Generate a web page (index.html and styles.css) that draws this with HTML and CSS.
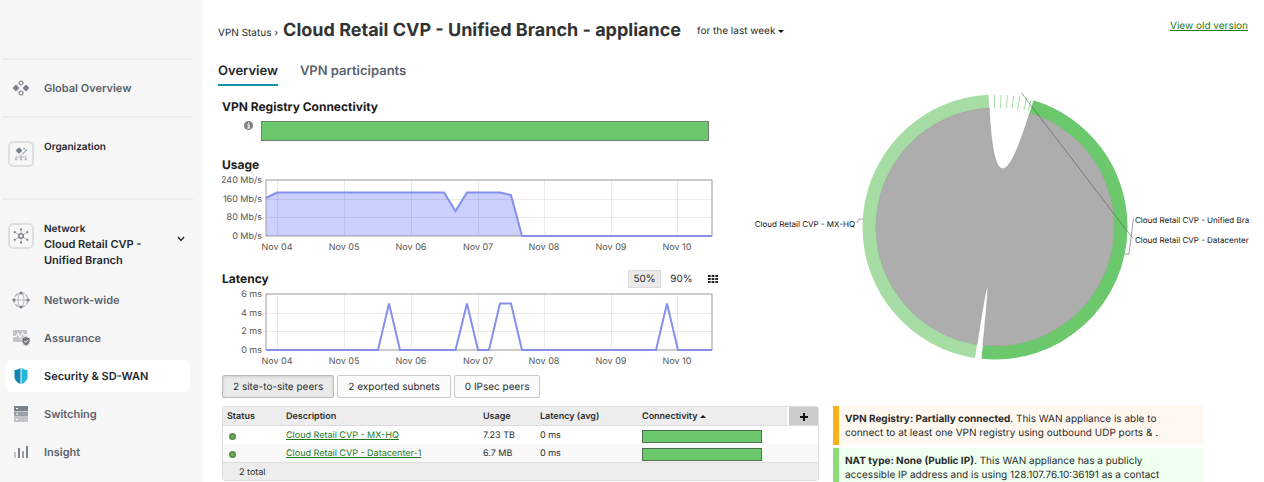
FILE: index.html
```html
<!DOCTYPE html>
<html lang="en">
<head>
  <meta charset="utf-8">
  <title>VPN Status</title>
  <link rel="stylesheet" href="styles.css">
</head>
<body>

  <aside class="sidebar">
    <div class="side-section global">
      <a class="side-row" href="#">
        <span class="side-icon">
          <svg width="16" height="16" viewBox="0 0 16 16">
            <path d="M3 5.6L5.4 8L3 10.4L.6 8zM13 5.6L15.4 8L13 10.4L10.6 8z" fill="#7a828c" stroke="#7a828c" stroke-width="1.4" stroke-linejoin="round"/>
            <circle cx="8" cy="3" r="1.9" fill="none" stroke="#8b929b" stroke-width="1.4"/>
            <circle cx="8" cy="13" r="1.9" fill="none" stroke="#8b929b" stroke-width="1.4"/>
          </svg>
        </span>
        Global Overview
      </a>
    </div>

    <div class="side-section organization">
      <span class="side-icon boxed">
        <svg width="14" height="14" viewBox="0 0 14 14">
          <path d="M9.5 1L12.3 3.6L9.5 6.4L8.5 5.4" fill="none" stroke="#8b929b" stroke-width="1.2" stroke-dasharray="1.5 1"/>
          <path d="M5 1.2L7.5 3.6L5 6L2.5 3.6z" fill="#7a828c" stroke="#7a828c" stroke-width="1.4" stroke-linejoin="round"/>
          <path d="M7 7.5V12M2 12V10H12V12" fill="none" stroke="#b4b8be" stroke-width="1.2"/>
          <path d="M1 12.5H3.4M5.8 12.5H8.2M10.6 12.5H13" stroke="#b4b8be" stroke-width="1.4"/>
        </svg>
      </span>
      <span class="side-label">Organization</span>
    </div>

    <div class="side-section network">
      <span class="side-icon boxed">
        <svg width="16" height="16" viewBox="0 0 16 16">
          <path d="M8 1V15M1.5 4L14.5 12M14.5 4L1.5 12" stroke="#b4b8be"/>
          <circle cx="8" cy="8" r="2.2" fill="#f7f7f7" stroke="#7a828c" stroke-width="1.6"/>
          <g fill="#7a828c">
            <circle cx="8" cy="1.3" r="1.1"/><circle cx="8" cy="14.7" r="1.1"/>
            <circle cx="1.7" cy="4.2" r="1.1"/><circle cx="14.3" cy="4.2" r="1.1"/>
            <circle cx="1.7" cy="11.8" r="1.1"/><circle cx="14.3" cy="11.8" r="1.1"/>
          </g>
        </svg>
      </span>
      <button class="network-picker">
        <span class="side-label">Network</span>
        <span class="network-name">Cloud Retail CVP - Unified Branch</span>
        <svg class="chevron" width="8" height="6" viewBox="0 0 8 6"><path d="M1 1L4 4.4L7 1" fill="none" stroke="#23282e" stroke-width="1.3"/></svg>
      </button>
    </div>

    <nav>
      <a class="side-row" href="#">
        <span class="side-icon">
          <svg width="18" height="18" viewBox="0 0 18 18">
            <g fill="none" stroke="#b4b8be">
              <circle cx="9" cy="9" r="7" stroke-width="1.4" stroke-dasharray="5 1.3"/>
              <ellipse cx="9" cy="9" rx="3" ry="7"/>
              <path d="M2 9H16"/>
            </g>
            <g fill="#7a828c">
              <circle cx="9" cy="2" r="1.6"/><circle cx="9" cy="16" r="1.6"/>
              <circle cx="2" cy="9" r="1.6"/><circle cx="16" cy="9" r="1.6"/>
            </g>
          </svg>
        </span>
        Network-wide
      </a>
      <a class="side-row" href="#">
        <span class="side-icon">
          <svg width="18" height="16" viewBox="0 0 18 16">
            <rect x="1" y="0" width="14" height="12" rx="1" fill="#c0c4c9"/>
            <path d="M1 6.5H4L6 3.5L8 7.5L10.5 2.5L12 5H15" fill="none" stroke="#f7f7f7" stroke-width="1.3"/>
            <path d="M14 6.5L18 8V11.5Q17.5 14.5 14 16Q10.5 14.5 10 11.5V8z" fill="#6f7782" stroke="#f7f7f7" stroke-width=".7"/>
            <path d="M12.3 11L13.6 12.3L15.8 9.8" fill="none" stroke="#fff"/>
          </svg>
        </span>
        Assurance
      </a>
      <a class="side-row active" href="#">
        <span class="side-icon">
          <svg width="14" height="16" viewBox="0 0 14 16">
            <path d="M6.5 0V16Q.5 13.5 .5 9V2Q4 1.8 6.5 0z" fill="#0f87ad"/>
            <path d="M7.5 0V16Q13.5 13.5 13.5 9V2Q10 1.8 7.5 0z" fill="#22b8dc"/>
          </svg>
        </span>
        Security &amp; SD-WAN
      </a>
      <a class="side-row" href="#">
        <span class="side-icon">
          <svg width="14" height="16" viewBox="0 0 14 16">
            <rect x="0" y="0" width="14" height="5" fill="#7a828c"/>
            <rect x="0" y="5.5" width="14" height="5" fill="#9ba0a8"/>
            <rect x="0" y="11" width="14" height="5" fill="#c0c4c9"/>
            <path d="M2 2.5H4M2 8H4M2 13.5H4" stroke="#fff"/>
          </svg>
        </span>
        Switching
      </a>
      <a class="side-row" href="#">
        <span class="side-icon">
          <svg width="16" height="14" viewBox="0 0 16 14">
            <rect x="1" y="7" width="2" height="6" fill="#c0c4c9"/>
            <rect x="5" y="3" width="2" height="10" fill="#7a828c"/>
            <rect x="9" y="6" width="2" height="7" fill="#9ba0a8"/>
            <rect x="13" y="1" width="2" height="12" fill="#7a828c"/>
          </svg>
        </span>
        Insight
      </a>
    </nav>
  </aside>

  <main>
    <header class="page-header">
      <span class="crumb">VPN Status ›</span>
      <h1>Cloud Retail CVP - Unified Branch - appliance</h1>
      <button class="timespan">for the last week <span class="caret"></span></button>
      <a class="old-version" href="#">View old version</a>
    </header>

    <div class="tabs">
      <a class="tab selected" href="#">Overview</a>
      <a class="tab" href="#">VPN participants</a>
    </div>

    <div class="summary">
      <div class="charts">
        <h2>VPN Registry Connectivity</h2>
        <div class="registry">
          <svg width="9" height="9" viewBox="0 0 9 9">
            <circle cx="4.5" cy="4.5" r="4.5" fill="#808080"/>
            <path d="M3.2 4H5V7M3 7H6.2M4 2.2H5.2" fill="none" stroke="#fff" stroke-width="1.2"/>
          </svg>
          <div class="registry-bar"></div>
        </div>

        <h2>Usage</h2>
        <svg class="chart" viewBox="0 0 497 80">
          <path class="area" d="M44 24L55 18.5H222L233.5 37L245 18.5H278L289 21L300 62H44z"/>
          <path class="grid" d="M55.5 6V62M122.5 6V62M189.5 6V62M256.5 6V62M322.5 6V62M389.5 6V62M455.5 6V62M44 25.5H490M44 43.5H490"/>
          <rect class="frame" x="44" y="6" width="446" height="56"/>
          <path class="line" d="M44 24L55 18.5H222L233.5 37L245 18.5H278L289 21L300 62H490"/>
          <g class="y-axis">
            <text x="40" y="9">240 Mb/s</text>
            <text x="40" y="28">160 Mb/s</text>
            <text x="40" y="46">80 Mb/s</text>
            <text x="40" y="65">0 Mb/s</text>
          </g>
          <g class="x-axis">
            <text x="55" y="76">Nov 04</text>
            <text x="122" y="76">Nov 05</text>
            <text x="189" y="76">Nov 06</text>
            <text x="256" y="76">Nov 07</text>
            <text x="322" y="76">Nov 08</text>
            <text x="389" y="76">Nov 09</text>
            <text x="455" y="76">Nov 10</text>
          </g>
        </svg>

        <div class="latency-head">
          <h2>Latency</h2>
          <button class="pct on">50%</button>
          <button class="pct">90%</button>
          <button class="grid-btn" aria-label="Table view">
            <svg width="10" height="8" viewBox="0 0 10 8"><path d="M0 1H10M0 4H10M0 7H10" stroke="#222" stroke-width="2" stroke-dasharray="2.7 .95"/></svg>
          </button>
        </div>
        <svg class="chart" viewBox="0 0 497 80">
          <path class="grid" d="M55.5 6V62M122.5 6V62M189.5 6V62M256.5 6V62M322.5 6V62M389.5 6V62M455.5 6V62M44 25.5H490M44 43.5H490"/>
          <rect class="frame" x="44" y="6" width="446" height="56"/>
          <path class="line" d="M44 62H156L167 15.5L178 62H233.5L245 15.5L256 62H267L278 15.5H289L300 62H434L445 15.5L456 62H490"/>
          <g class="y-axis">
            <text x="40" y="9">6 ms</text>
            <text x="40" y="28">4 ms</text>
            <text x="40" y="46">2 ms</text>
            <text x="40" y="65">0 ms</text>
          </g>
          <g class="x-axis">
            <text x="55" y="76">Nov 04</text>
            <text x="122" y="76">Nov 05</text>
            <text x="189" y="76">Nov 06</text>
            <text x="256" y="76">Nov 07</text>
            <text x="322" y="76">Nov 08</text>
            <text x="389" y="76">Nov 09</text>
            <text x="455" y="76">Nov 10</text>
          </g>
        </svg>
      </div>

      <!-- chord diagram, origin at the centre of the circle -->
      <svg class="chord" viewBox="-244 -137 501 278">
        <path d="M-20 131A132.5 132.5 0 0 1 -132.5 0A132.5 132.5 0 0 1 -6.5 -132.3L-5.8 -118.9A119 119 0 0 0 -119 0A119 119 0 0 0 -18 117.6z" fill="#a5dda5"/>
        <path d="M38.5 -126.8A132.5 132.5 0 0 1 132.5 0A132.5 132.5 0 0 1 -13.5 131.8L-12.1 118.4A119 119 0 0 0 119 0A119 119 0 0 0 34.6 -113.9z" fill="#6cc86c"/>
        <path d="M-18 117.6A119 119 0 0 1 -119 0A119 119 0 0 1 -5.8 -118.9Q0 0 34.6 -113.9A119 119 0 0 1 119 0A119 119 0 0 1 -12.1 118.4Q0 0 -18 117.6z" fill="#adadad" stroke="#8a948a" stroke-width=".5"/>
        <path d="M-.5 -132V-119M6 -132L5.5 -119M12.5 -132L11.5 -119M18.5 -131L17 -118.5M25 -131L22.5 -117M31.500 -130L29 -117M36 -127L33 -116" stroke="#8fd78f" stroke-width=".8"/>
        <path class="leader" d="M26.5 -134L136 9L138 11M138.5 -9L134 27H130M-132 -8H-136L-138 -4"/>
        <text x="-140" y="0" text-anchor="end" class="chord-label">Cloud Retail CVP - MX-HQ</text>
        <text x="140" y="-4" class="chord-label">Cloud Retail CVP - Unified Bra</text>
        <text x="140" y="16" class="chord-label">Cloud Retail CVP - Datacenter</text>
      </svg>
    </div>

    <div class="peer-buttons">
      <button class="on">2 site-to-site peers</button>
      <button>2 exported subnets</button>
      <button>0 IPsec peers</button>
    </div>

    <div class="details">
      <table>
        <thead>
          <tr>
            <th class="c-status">Status</th>
            <th class="c-desc">Description</th>
            <th class="c-usage">Usage</th>
            <th class="c-latency">Latency (avg)</th>
            <th class="c-conn">Connectivity <span class="caret up"></span></th>
            <th class="c-add"><button aria-label="Add column"><svg width="8" height="8" viewBox="0 0 8 8"><path d="M4 0V8M0 4H8" stroke="#111" stroke-width="2"/></svg></button></th>
          </tr>
        </thead>
        <tbody>
          <tr>
            <td><span class="dot"></span></td>
            <td><a href="#">Cloud Retail CVP - MX-HQ</a></td>
            <td>7.23 TB</td>
            <td>0 ms</td>
            <td colspan="2"><div class="conn-bar"></div></td>
          </tr>
          <tr>
            <td><span class="dot"></span></td>
            <td><a href="#">Cloud Retail CVP - Datacenter-1</a></td>
            <td>6.7 MB</td>
            <td>0 ms</td>
            <td colspan="2"><div class="conn-bar"></div></td>
          </tr>
        </tbody>
        <tfoot>
          <tr><td colspan="6">2 total</td></tr>
        </tfoot>
      </table>

      <div class="notices">
        <p class="notice warn"><b>VPN Registry: Partially connected</b>. This WAN appliance is able to connect to at least one VPN registry using outbound UDP ports &amp; .</p>
        <p class="notice ok"><b>NAT type: None (Public IP)</b>. This WAN appliance has a publicly accessible IP address and is using 128.107.76.10:36191 as a contact</p>
      </div>
    </div>
  </main>

</body>
</html>
```
FILE: styles.css
```css
* {
  box-sizing: border-box;
}
body {
  margin: 0;
  height: 100vh;
  overflow: hidden;
  display: flex;
  font-family: Inter, "Liberation Sans", sans-serif;
  font-size: 10px;
  line-height: 16px;
  text-rendering: geometricPrecision;
  color: #2b2b2b;
  background: #fff;
}
button {
  font: inherit;
  text-rendering: inherit;
  color: inherit;
  background: none;
  border: none;
  padding: 0;
  cursor: pointer;
}
svg {
  display: block;
}
a {
  color: #1f7a1a;
}

/* sidebar */
.sidebar {
  width: 203px;
  flex: none;
  background: #f7f7f7;
  padding-top: 58px;
  font-size: 11px;
  font-weight: 600;
}
.side-section {
  margin: 0 10px 0 2px;
  padding-left: 6px;
  border-top: 2px solid #eee;
  display: flex;
  gap: 10px;
}
.side-row {
  display: flex;
  align-items: center;
  gap: 10px;
  color: #5b626c;
  text-decoration: none;
}
.side-icon {
  width: 26px;
  height: 26px;
  flex: none;
  display: flex;
  align-items: center;
  justify-content: center;
}
.side-icon.boxed {
  border: 2px solid #dddfe2;
  border-radius: 5px;
}
.side-label {
  display: block;
  font-size: 10px;
  line-height: 14px;
  color: #23282e;
}
.global {
  height: 58px;
}
.organization {
  height: 82px;
  padding-top: 22px;
}
.organization .side-icon,
.network .side-icon {
  margin-top: 1px;
}
.network {
  padding-top: 22px;
  height: 86px;
}
.network-picker {
  flex: 1;
  display: grid;
  grid-template-columns: 1fr 16px;
  align-content: start;
  align-items: center;
  text-align: left;
  color: #23282e;
}
.network-picker .side-label {
  grid-column: 1 / 3;
}
.network-name {
  grid-row: 2 / 4;
  padding-right: 12px;
  font-weight: 600;
}
.chevron {
  grid-column: 2;
}
nav {
  padding: 0 13px 0 5px;
  display: flex;
  flex-direction: column;
  gap: 6px;
}
nav .side-row {
  height: 32px;
  padding-left: 3px;
  border-radius: 6px;
}
nav .active {
  background: #fff;
  color: #23282e;
}

/* header and tabs */
main {
  flex: 1;
  min-width: 0;
  padding: 18px 12px 0 19px;
}
.page-header {
  display: flex;
  align-items: baseline;
  height: 42px;
  margin-left: -4px;
}
h1 {
  font-size: 18px;
  line-height: 26px;
  margin: 0 16px 0 5px;
  color: #333;
}
.timespan {
  align-self: flex-start;
  line-height: 26px;
  white-space: nowrap;
}
.caret {
  display: inline-block;
  border: 3px solid transparent;
  border-top-color: #111;
  border-bottom: none;
  vertical-align: middle;
}
.caret.up {
  border-top: none;
  border-bottom: 3px solid #111;
}
.old-version {
  margin: 0 4px 0 auto;
  align-self: flex-start;
}
.tabs {
  display: flex;
  gap: 22px;
  margin-left: -4px;
}
.tab {
  font-size: 13px;
  font-weight: 600;
  line-height: 22px;
  padding-bottom: 2px;
  color: #5b626c;
  text-decoration: none;
  border-bottom: 2px solid transparent;
}
.tab.selected {
  color: #23282e;
  border-bottom-color: #1990ad;
}

/* charts */
.summary {
  display: grid;
  grid-template-columns: 497fr 501fr;
  gap: 32px;
  align-items: start;
  margin-top: 4px;
}
.charts {
  padding-top: 8px;
}
h2 {
  font-size: 12px;
  line-height: 18px;
  font-weight: 700;
  margin: 0;
  color: #1d1d1d;
}
.registry {
  display: flex;
  gap: 8px;
  padding: 5px 10px 15px 22px;
}
.registry-bar {
  flex: 1;
  height: 20px;
  background: #6cc86c;
  border: 1px solid #708070;
}
.chart {
  width: 100%;
}
.chart text {
  font-size: 9px;
  fill: #555;
}
.y-axis {
  text-anchor: end;
}
.x-axis {
  text-anchor: middle;
}
.grid {
  stroke: #000;
  stroke-opacity: .08;
}
.area {
  fill: #ccd0ff;
}
.frame {
  fill: none;
  stroke: #999;
}
.line {
  fill: none;
  stroke: #8590ec;
  stroke-width: 2;
}
.latency-head {
  display: flex;
  align-items: center;
  height: 18px;
  margin-top: 16px;
}
.latency-head h2 {
  margin-right: auto;
}
.pct {
  width: 33px;
  height: 18px;
  margin-right: 4px;
}
.pct.on {
  background: #e9e9e9;
  border: 1px solid #ddd;
}
.grid-btn {
  margin: 0 1px 0 6px;
}
.chord {
  width: 100%;
  overflow: hidden;
}
.chord-label {
  font-size: 8px;
  fill: #111;
}
.leader {
  fill: none;
  stroke: #444;
  stroke-width: .5;
}

/* peers table and notices */
.peer-buttons {
  display: flex;
  gap: 3px;
  margin: 7px 0 8px;
}
.peer-buttons button {
  height: 23px;
  padding: 0 10px;
  border: 1px solid #c9c9c9;
  border-radius: 2px;
  background: #fbfbfb;
}
.peer-buttons .on {
  background: #ebebeb;
  border-color: #bbb;
  box-shadow: inset 0 1px 3px #ccc;
}
.details {
  display: grid;
  grid-template-columns: 597fr 370fr 35fr;
  gap: 14px;
  align-items: start;
}
table {
  width: 100%;
  table-layout: fixed;
  border-spacing: 0;
  border: 1px solid #ddd;
  border-radius: 3px;
  font-size: 9px;
  line-height: 12px;
}
th, td {
  padding: 2px 4px 0;
  text-align: left;
}
th {
  height: 19px;
  background: #ededed;
  border-bottom: 1px solid #ddd;
  font-weight: 600;
}
td {
  height: 18px;
}
tbody tr:nth-child(2) td {
  background: #f8f8f8;
}
tfoot td {
  background: #ededed;
  border-top: 1px solid #ddd;
  padding-left: 16px;
}
.c-status { width: 59px; }
.c-usage { width: 57px; }
.c-latency { width: 102px; }
.c-conn { width: 149px; }
.c-add {
  width: 31px;
  background: #ccc;
  border-left: 2px solid #fff;
}
.c-add button {
  display: block;
  margin: 0 auto;
}
.dot {
  display: block;
  width: 7px;
  height: 7px;
  margin-left: 2px;
  border: 2px solid #5a8c4c;
  border-radius: 50%;
  background: #6cbf3f;
}
.conn-bar {
  width: 120px;
  height: 13px;
  background: #6cc86c;
  border: 1px solid #4f6f4f;
}
.notice {
  margin: 0 0 3px;
  padding: 6px 32px 5px 6px;
  border-left: 6px solid #fbb11c;
  background: #fff8f0;
  line-height: 14px;
}
.notice.ok {
  border-left-color: #8fdc78;
  background: #effff0;
}
```
